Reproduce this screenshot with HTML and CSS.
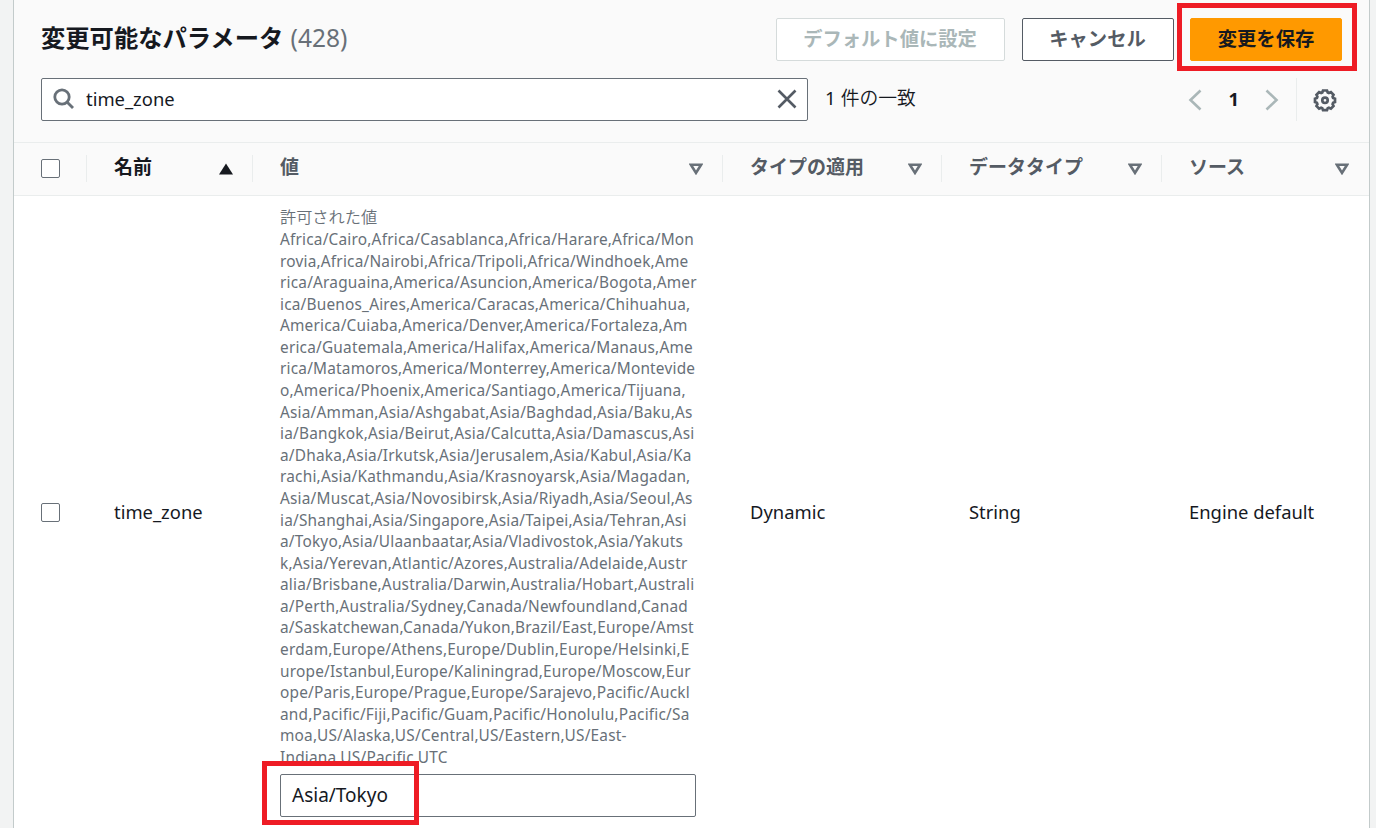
FILE: index.html
```html
<!DOCTYPE html>
<html lang="ja">
<head>
	<meta charset="utf-8">
	<title>変更可能なパラメータ</title>
	<link rel="stylesheet" href="styles.css">
</head>
<body>

<div class="panel">
	<div class="header">
		<h2>変更可能なパラメータ <span class="counter">(428)</span></h2>
		<button class="btn" disabled>デフォルト値に設定</button>
		<button class="btn cancel">キャンセル</button>
		<button class="btn primary">変更を保存</button>
	</div>

	<div class="tools">
		<div class="search">
			<svg class="search-icon" width="22" height="22" viewBox="0 0 22 22"><circle cx="9" cy="9" r="7.2"/><path d="M14 14l6 6"/></svg>
			<span class="query">time_zone</span>
			<svg class="clear-icon" width="20" height="20" viewBox="0 0 20 20"><path d="M1.5 1.5l17 17M18.5 1.5l-17 17"/></svg>
		</div>
		<span class="matches"><span class="num">1</span> 件の一致</span>
		<div class="pages">
			<svg width="14" height="22" viewBox="0 0 14 22"><path d="M12.5 1.5L2.5 11l10 9.5"/></svg>
			<b>1</b>
			<svg width="14" height="22" viewBox="0 0 14 22"><path d="M1.5 1.5l10 9.5l-10 9.5"/></svg>
		</div>
		<div class="settings">
			<svg width="24" height="24" viewBox="0 0 24 24"><path d="M10 2.5h4l.7 2 1.2.5 2-.9 2.6 2.7-.9 1.9.5 1.3 1.9.7v3.400l-1.900.7-.5 1.300.9 1.900-2.600 2.700-2-.9-1.200.5-.7 1.900h-4l-.7-1.900-1.200-.5-2 .9-2.600-2.700.9-1.900-.5-1.300-1.900-.7v-3.400l1.900-.7.5-1.300-.9-1.900 2.600-2.700 2 .9 1.200-.5z"/><circle cx="12" cy="12.300" r="2.700"/></svg>
		</div>
	</div>

	<table>
		<colgroup>
			<col class="c-check"><col class="c-name"><col class="c-value"><col class="c-apply"><col class="c-type"><col class="c-source">
		</colgroup>
		<tr>
			<th><div class="th"><span class="check"></span></div></th>
			<th><div class="th sorted"><span>名前</span> <svg width="14" height="12" viewBox="0 0 14 12"><path d="M7 .5L14 11.5H0z"/></svg></div></th>
			<th><div class="th"><span>値</span> <svg width="14" height="12" viewBox="0 0 14 12"><path d="M1.9 1.800h10.200L7 9.900z"/></svg></div></th>
			<th><div class="th"><span>タイプの適用</span> <svg width="14" height="12" viewBox="0 0 14 12"><path d="M1.9 1.800h10.200L7 9.900z"/></svg></div></th>
			<th><div class="th"><span>データタイプ</span> <svg width="14" height="12" viewBox="0 0 14 12"><path d="M1.9 1.800h10.200L7 9.900z"/></svg></div></th>
			<th><div class="th"><span>ソース</span> <svg width="14" height="12" viewBox="0 0 14 12"><path d="M1.9 1.800h10.200L7 9.900z"/></svg></div></th>
		</tr>
		<tr class="row">
			<td><span class="check"></span></td>
			<td>time_zone</td>
			<td class="value">
				<div class="allowed">許可された値</div>
				<div class="zones">
Africa/Cairo,Africa/Casablanca,Africa/Harare,Africa/Mon<br>
rovia,Africa/Nairobi,Africa/Tripoli,Africa/Windhoek,Ame<br>
rica/Araguaina,America/Asuncion,America/Bogota,Amer<br>
ica/Buenos_Aires,America/Caracas,America/Chihuahua,<br>
America/Cuiaba,America/Denver,America/Fortaleza,Am<br>
erica/Guatemala,America/Halifax,America/Manaus,Ame<br>
rica/Matamoros,America/Monterrey,America/Montevide<br>
o,America/Phoenix,America/Santiago,America/Tijuana,<br>
Asia/Amman,Asia/Ashgabat,Asia/Baghdad,Asia/Baku,As<br>
ia/Bangkok,Asia/Beirut,Asia/Calcutta,Asia/Damascus,Asi<br>
a/Dhaka,Asia/Irkutsk,Asia/Jerusalem,Asia/Kabul,Asia/Ka<br>
rachi,Asia/Kathmandu,Asia/Krasnoyarsk,Asia/Magadan,<br>
Asia/Muscat,Asia/Novosibirsk,Asia/Riyadh,Asia/Seoul,As<br>
ia/Shanghai,Asia/Singapore,Asia/Taipei,Asia/Tehran,Asi<br>
a/Tokyo,Asia/Ulaanbaatar,Asia/Vladivostok,Asia/Yakuts<br>
k,Asia/Yerevan,Atlantic/Azores,Australia/Adelaide,Austr<br>
alia/Brisbane,Australia/Darwin,Australia/Hobart,Australi<br>
a/Perth,Australia/Sydney,Canada/Newfoundland,Canad<br>
a/Saskatchewan,Canada/Yukon,Brazil/East,Europe/Amst<br>
erdam,Europe/Athens,Europe/Dublin,Europe/Helsinki,E<br>
urope/Istanbul,Europe/Kaliningrad,Europe/Moscow,Eur<br>
ope/Paris,Europe/Prague,Europe/Sarajevo,Pacific/Auckl<br>
and,Pacific/Fiji,Pacific/Guam,Pacific/Honolulu,Pacific/Sa<br>
moa,US/Alaska,US/Central,US/Eastern,US/East-<br>
Indiana,US/Pacific,UTC
				</div>
				<div class="input">Asia/Tokyo</div>
			</td>
			<td>Dynamic</td>
			<td>String</td>
			<td>Engine default</td>
		</tr>
	</table>
</div>

<!-- red highlight frames -->
<div class="mark mark-save"></div>
<div class="mark mark-value"></div>

</body>
</html>
```
FILE: styles.css
```css
* {
  box-sizing: border-box;
}

body {
  margin: 0;
  height: 828px;
  overflow: hidden;
  position: relative;
  background-color: #f2f3f3;
  color: #16191f;
  font-family: "Noto Sans", "Noto Sans CJK JP", sans-serif;
  font-size: 18.4px;
}

svg {
  fill: none;
  flex: none;
}

.panel {
  margin: 0 6px 0 13px;
  height: 828px;
  background-color: #fafafa;
  border-left: 1px solid #c3cbcb;
  border-right: 1px solid #c3cbcb;
}

/* Title and buttons */
.header {
  display: flex;
  align-items: center;
  height: 78px;
  padding: 0 27px;
}

h2 {
  margin: 0 auto 2px 0;
  font-size: 24.3px;
  line-height: 36px;
}

.counter {
  margin-left: 1px;
  font-size: 24.5px;
  font-weight: normal;
  color: #687078;
}

.btn {
  height: 43px;
  margin-left: 17px;
  padding: 0 1px 3px 0;
  width: 152px;
  border: 1px solid #545b64;
  border-radius: 2px;
  background-color: white;
  color: #545b64;
  font-family: "Noto Sans CJK JP", sans-serif;
  font-size: 19.3px;
  font-weight: bold;
}

.btn:disabled {
  width: 229px;
  border-color: #d5dbdb;
  color: #aab7b8;
}

.primary {
  margin-left: 16px;
  padding-right: 0;
  border-color: #ff9900;
  background-color: #ff9900;
  color: #16191f;
}

/* Search and pagination */
.tools {
  display: flex;
  align-items: center;
  height: 64px;
  padding: 0 32px 21px 27px;
}

.search {
  display: flex;
  align-items: center;
  width: 767px;
  height: 43px;
  padding: 0 10px 0 11px;
  border: 1px solid #687078;
  border-radius: 2px;
  background-color: white;
}

.search-icon {
  margin: 0 11px 1px 0;
  stroke: #687078;
  stroke-width: 2.8;
}

.query {
  padding-bottom: 2px;
}

.clear-icon {
  margin: 0 0 1px auto;
  stroke: #545b64;
  stroke-width: 2.6;
}

.matches {
  margin: 0 auto 6px 17px;
  font-size: 18.8px;
  font-weight: 350;
}

.num {
  font-weight: normal;
}

.pages {
  display: flex;
  align-items: center;
  gap: 26px;
  margin: 0 17px 0 0;
  stroke: #aab7b8;
  stroke-width: 2.6;
}

.pages b {
  padding-bottom: 2px;
}

.settings {
  display: flex;
  align-items: center;
  height: 43px;
  padding: 0 0 0 16px;
  border-left: 1px solid #eaeded;
  stroke: #545b64;
  stroke-width: 2.7;
}

/* Parameter table */
table {
  width: 1355px;
  table-layout: fixed;
  border-collapse: separate;
  border-spacing: 0;
}

.c-check { width: 73px; }
.c-name { width: 166px; }
.c-value { width: 470px; }
.c-apply { width: 219px; }
.c-type { width: 220px; }
.c-source { width: 207px; }

th {
  height: 54px;
  padding: 0 0 1px;
  border-top: 1px solid #eaeded;
  border-bottom: 1px solid #eaeded;
}

.th {
  display: flex;
  align-items: center;
  height: 27px;
  padding: 0 19px 0 27px;
  border-right: 1px solid #eaeded;
  color: #545b64;
  font-family: "Noto Sans CJK JP", sans-serif;
  font-size: 19px;
  line-height: 24px;
  text-align: left;
}

.th span {
  margin-bottom: 5px;
}

.th .check {
  margin-bottom: 0;
}

th:last-child .th {
  border-right: none;
  padding-right: 20px;
}

.th svg {
  margin: 1px 0 0 auto;
  stroke: #687078;
  stroke-width: 2.6;
}

.th.sorted {
  color: #16191f;
}

.sorted svg {
  fill: #16191f;
  stroke: none;
}

.row {
  height: 633px;
  background-color: white;
}

td {
  padding: 0 27px 2px;
  vertical-align: middle;
}

td:first-child {
  padding-bottom: 0;
}

.check {
  display: block;
  width: 19px;
  height: 19px;
  border: 1px solid #687078;
  border-radius: 2px;
  background-color: white;
}

.value {
  padding: 10px 27px 0;
  vertical-align: top;
  color: #687078;
}

.allowed {
  font-size: 16.2px;
  font-weight: 350;
  line-height: 22px;
}

.zones {
  padding-top: 1px;
  font-size: 15.4px;
  line-height: 21.58px;
  letter-spacing: 0.2px;
  white-space: nowrap;
}

.input {
  display: flex;
  align-items: center;
  height: 43px;
  margin-top: 5.5px;
  padding-left: 11px;
  border: 1px solid #687078;
  border-radius: 2px;
  color: #16191f;
  font-size: 19px;
}

/* Highlight frames */
.mark {
  position: absolute;
  border: 5px solid #ee1c25;
}

.mark-save {
  left: 1177px;
  top: 3px;
  width: 180px;
  height: 68px;
}

.mark-value {
  left: 262px;
  top: 761px;
  width: 157px;
  height: 64px;
}
```
